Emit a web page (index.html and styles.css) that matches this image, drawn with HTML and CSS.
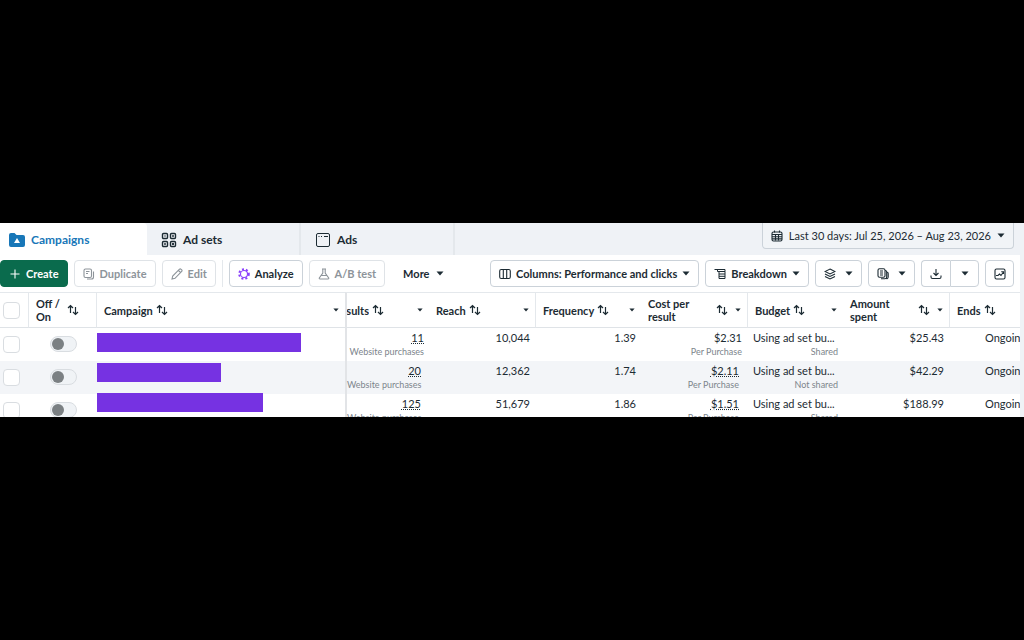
FILE: index.html
```html
<!DOCTYPE html>
<html lang="en">
<head>
    <meta charset="UTF-8">
    <meta name="viewport" content="width=device-width, initial-scale=1.0">
    <title>Ads Manager - Campaigns</title>
    <link rel="stylesheet" href="styles.css">
</head>
<body>
    <!-- Shared icons -->
    <svg class="sprite" aria-hidden="true">
        <symbol id="i-sort" viewBox="0 0 12 12"><path d="M3.500 9V1.500M1 4l2.500-2.500L6 4M8.500 3v7.500M6 8l2.500 2.500L11 8"/></symbol>
        <symbol id="i-caret" viewBox="0 0 8 5"><path d="M0.500 0.500h7L4 4.500z"/></symbol>
    </svg>

    <main class="manager">
        <header class="top-bar">
            <nav class="tabs">
                <a href="#" class="tab active">
                    <svg class="icon-tab" viewBox="0 0 16 16"><path fill="#1877b8" d="M0 3a2 2 0 0 1 2-2h3.500l2 2H14a2 2 0 0 1 2 2v8a2 2 0 0 1-2 2H2a2 2 0 0 1-2-2z"/><path fill="#fff" d="M8 6l3 5H5z"/></svg>
                    Campaigns
                </a>
                <a href="#" class="tab">
                    <svg class="icon-tab line-icon" viewBox="0 0 16 16"><rect x="1.500" y="1.500" width="5" height="5" rx="1"/><rect x="9.500" y="1.500" width="5" height="5" rx="1"/><rect x="1.500" y="9.500" width="5" height="5" rx="1"/><rect x="9.500" y="9.500" width="5" height="5" rx="1"/><path d="M12 3v2M4 11v2M12 11v2M11 12h2M3.500 4h1"/></svg>
                    Ad sets
                </a>
                <a href="#" class="tab">
                    <svg class="icon-tab line-icon thin" viewBox="0 0 16 16"><rect x="1.500" y="1.500" width="13" height="13" rx="1.500"/><path d="M3.500 4.500h1M6 4.500h1M9 4.500h4"/></svg>
                    Ads
                </a>
            </nav>
            <button class="btn date-btn">
                <svg class="icon" viewBox="0 0 12 12"><rect x="1" y="2" width="10" height="9" rx="1.500"/><path d="M1 4.500h10M3.500 0.500v2M8.500 0.500v2M1 6.700h10M1 8.900h10M4.500 5v5.500M7.500 5v5.500"/></svg>
                Last 30 days: Jul 25, 2026 – Aug 23, 2026
                <svg class="caret"><use href="#i-caret"/></svg>
            </button>
        </header>

        <div class="workspace">
            <div class="toolbar">
                <button class="btn primary"><svg class="icon" viewBox="0 0 12 12"><path d="M6 1.500v9M1.500 6h9"/></svg>Create</button>
                <button class="btn muted"><svg class="icon" viewBox="0 0 12 12"><rect x="1" y="1" width="7.500" height="8.500" rx="1.500"/><path d="M3 3.500h3.500M3 5.500h2M10.500 3.500v5.500a2 2 0 0 1-2 2H4"/></svg>Duplicate</button>
                <button class="btn muted"><svg class="icon" viewBox="0 0 12 12"><path d="M1 11l.7-3L8.500 1.200q.8-.6 1.600.1l.6.6q.7.800 0 1.600L4 10.300zM7.500 2.500L9.500 4.500"/></svg>Edit</button>
                <span class="divider"></span>
                <button class="btn"><svg class="icon analyze" viewBox="0 0 12 12"><circle cx="6" cy="6" r="3.500"/><circle class="dots" cx="6" cy="6" r="4.800"/></svg>Analyze</button>
                <button class="btn muted"><svg class="icon" viewBox="0 0 12 12"><path d="M4 1h4M4.800 1v4L1.300 10q-.3 1 .7 1h8q1 0 .7-1L7.200 5V1M3.500 7.500h5"/></svg>A/B test</button>
                <button class="btn plain">More <svg class="caret"><use href="#i-caret"/></svg></button>

                <div class="toolbar-right">
                    <button class="btn"><svg class="icon" viewBox="0 0 12 12"><rect x="0.700" y="1.500" width="10.600" height="9" rx="1.500"/><path d="M4.300 1.500v9M7.700 1.500v9"/></svg>Columns: Performance and clicks<svg class="caret"><use href="#i-caret"/></svg></button>
                    <button class="btn"><svg class="icon thin" viewBox="0 0 12 12"><path d="M0.500 1.500h10.500v2H3.500v-2M5 3.500h6v7H5zM5 6h6M5 8.300h6"/></svg>Breakdown<svg class="caret"><use href="#i-caret"/></svg></button>
                    <button class="btn icon-btn" aria-label="View"><svg class="icon" viewBox="0 0 12 12"><path d="M6 1l5 2.500L6 6 1 3.500zM1 6l5 2.500L11 6M1 8.500L6 11l5-2.500"/></svg><svg class="caret"><use href="#i-caret"/></svg></button>
                    <button class="btn icon-btn" aria-label="Reports"><svg class="icon" viewBox="0 0 12 12"><rect x="1" y="0.700" width="7" height="8.500" rx="1.500"/><path d="M3 3h3M3 5h3M3 7h3M8 2.500q1.700 0 1.700 1.500v5q0 1.800-1.800 1.800H4M9.700 4q1.500 0 1.500 1.500V9q0 1.500-1.500 2"/></svg><svg class="caret"><use href="#i-caret"/></svg></button>
                    <div class="btn-group">
                        <button class="btn square" aria-label="Export"><svg class="icon" viewBox="0 0 12 12"><path d="M6 1v6.500M3.500 5L6 7.500 8.500 5M1 7.500v1.500q0 1.500 1.500 1.500h7q1.500 0 1.500-1.500V7.500"/></svg></button>
                        <button class="btn square" aria-label="Export options"><svg class="caret"><use href="#i-caret"/></svg></button>
                    </div>
                    <button class="btn square" aria-label="Charts"><svg class="icon" viewBox="0 0 12 12"><rect x="1" y="1" width="10" height="10" rx="1.500"/><path d="M2 7.500h2L5.500 6 7 7.500 9.500 4M7.200 3.800h2.300V6"/></svg></button>
                </div>
            </div>

            <div class="table-pane">
                <table class="grid">
                    <colgroup>
                        <col class="c-check"><col class="c-toggle"><col class="c-campaign"><col class="c-results"><col class="c-metric"><col class="c-metric"><col class="c-metric"><col class="c-budget"><col class="c-metric"><col class="c-ends">
                    </colgroup>
                    <thead>
                        <tr>
                            <th class="check"><input type="checkbox" aria-label="Select all"></th>
                            <th class="line"><div class="head wide">Off /<br>On<svg class="sort"><use href="#i-sort"/></svg></div></th>
                            <th class="line"><div class="head">Campaign<svg class="sort"><use href="#i-sort"/></svg><svg class="caret push"><use href="#i-caret"/></svg></div></th>
                            <th class="edge"><div class="head"><span class="cut">Results</span><svg class="sort"><use href="#i-sort"/></svg><svg class="caret push"><use href="#i-caret"/></svg></div></th>
                            <th><div class="head">Reach<svg class="sort"><use href="#i-sort"/></svg><svg class="caret push"><use href="#i-caret"/></svg></div></th>
                            <th class="line"><div class="head">Frequency<svg class="sort"><use href="#i-sort"/></svg><svg class="caret push"><use href="#i-caret"/></svg></div></th>
                            <th><div class="head wide">Cost per<br>result<svg class="sort push"><use href="#i-sort"/></svg><svg class="caret"><use href="#i-caret"/></svg></div></th>
                            <th class="line"><div class="head">Budget<svg class="sort"><use href="#i-sort"/></svg><svg class="caret push"><use href="#i-caret"/></svg></div></th>
                            <th><div class="head wide">Amount<br>spent<svg class="sort push"><use href="#i-sort"/></svg><svg class="caret"><use href="#i-caret"/></svg></div></th>
                            <th class="line"><div class="head">Ends<svg class="sort"><use href="#i-sort"/></svg></div></th>
                        </tr>
                    </thead>
                    <tbody>
                        <tr>
                            <td class="check"><input type="checkbox" aria-label="Select campaign"></td>
                            <td class="toggle"><input type="checkbox" class="switch" role="switch" aria-label="Off / On"></td>
                            <td></td>
                            <td class="edge"><span class="tip">11</span><small>Website purchases</small></td>
                            <td>10,044</td>
                            <td>1.39</td>
                            <td>$2.31<small>Per Purchase</small></td>
                            <td class="budget">Using ad set bu...<small>Shared</small></td>
                            <td>$25.43</td>
                            <td class="ends">Ongoing</td>
                        </tr>
                        <tr>
                            <td class="check"><input type="checkbox" aria-label="Select campaign"></td>
                            <td class="toggle"><input type="checkbox" class="switch" role="switch" aria-label="Off / On"></td>
                            <td></td>
                            <td class="edge inset"><span class="tip">20</span><small>Website purchases</small></td>
                            <td>12,362</td>
                            <td>1.74</td>
                            <td class="inset"><span class="tip">$2.11</span><small>Per Purchase</small></td>
                            <td class="budget">Using ad set bu...<small>Not shared</small></td>
                            <td>$42.29</td>
                            <td class="ends">Ongoing</td>
                        </tr>
                        <tr>
                            <td class="check"><input type="checkbox" aria-label="Select campaign"></td>
                            <td class="toggle"><input type="checkbox" class="switch" role="switch" aria-label="Off / On"></td>
                            <td></td>
                            <td class="edge inset"><span class="tip">125</span><small>Website purchases</small></td>
                            <td>51,679</td>
                            <td>1.86</td>
                            <td class="inset"><span class="tip">$1.51</span><small>Per Purchase</small></td>
                            <td class="budget">Using ad set bu...<small>Shared</small></td>
                            <td>$188.99</td>
                            <td class="ends">Ongoing</td>
                        </tr>
                    </tbody>
                </table>

                <!-- Blocks covering the campaign names -->
                <div class="masks">
                    <span class="mask long"></span>
                    <span class="mask short"></span>
                    <span class="mask medium"></span>
                </div>
            </div>
        </div>
    </main>
</body>
</html>
```

FILE: styles.css
```css
* {
    margin: 0;
    padding: 0;
    box-sizing: border-box;
}

body {
    min-height: 100vh;
    display: flex;
    flex-direction: column;
    justify-content: center;
    font-family: Lato, Roboto, Arial, sans-serif;
    font-size: 11px;
    line-height: 14px;
    color: #1c2b33;
    background-color: #000;
}

button,
input {
    font: inherit;
    color: inherit;
}

.sprite {
    position: absolute;
    width: 0;
    height: 0;
}

.manager {
    background-color: #eff2f6;
    overflow: hidden;
}

/* Tabs and date range */
.top-bar {
    display: flex;
    justify-content: space-between;
    align-items: flex-start;
    height: 32px;
    padding-right: 10px;
}

.tabs {
    display: flex;
    gap: 5px;
    height: 100%;
}

.tab {
    display: flex;
    align-items: center;
    gap: 6px;
    width: 149px;
    padding: 2px 9px 0;
    border-right: 2px solid #e4e8ec;
    font-size: 12px;
    font-weight: 700;
    color: #1c2b33;
    text-decoration: none;
}

.tab.active {
    width: 147px;
    color: #1877b8;
    background-color: #fff;
    border-right: none;
    border-radius: 0 4px 0 0;
}

.icon-tab {
    width: 16px;
    height: 16px;
}

.line-icon,
.icon {
    fill: none;
    stroke: currentColor;
}

.line-icon {
    stroke-width: 1.4;
}

.icon {
    width: 12px;
    height: 12px;
    flex: none;
    stroke-width: 1.1;
}

.thin {
    stroke-width: 1;
}

/* Buttons */
.btn {
    display: flex;
    align-items: center;
    gap: 5px;
    height: 27px;
    padding: 0 8px;
    border: 1px solid #cbd2d9;
    border-radius: 4px;
    background-color: #fff;
    font-weight: 700;
    white-space: nowrap;
    cursor: pointer;
}

.caret {
    width: 8px;
    height: 5px;
    flex: none;
    fill: currentColor;
}

.btn.date-btn {
    gap: 6px;
    height: 26px;
    border-top: none;
    border-radius: 0 0 4px 4px;
    background-color: #f1f4f7;
    font-weight: 400;
}

.btn.primary {
    color: #fff;
    background-color: #0a6b4d;
    border-color: #0a6b4d;
}

.btn.muted {
    color: #8d949a;
    border-color: #dfe3e7;
}

.btn.plain {
    gap: 7px;
    border-color: transparent;
    margin-left: 3px;
}

.btn.icon-btn {
    gap: 9px;
}

.btn.square {
    justify-content: center;
    width: 29px;
    padding: 0;
}

.btn-group {
    display: flex;
}

.btn-group .btn:first-child {
    border-right: none;
    border-radius: 4px 0 0 4px;
}

.btn-group .btn:last-child {
    border-radius: 0 4px 4px 0;
}

.icon.analyze {
    stroke: #8a3ffc;
}

.analyze .dots {
    stroke-width: 2;
    stroke-dasharray: 2 2;
}

.divider {
    width: 1px;
    height: 27px;
    background-color: #e4e8ec;
}

/* Workspace */
.workspace {
    margin-right: 4px;
    background-color: #fff;
}

.toolbar {
    display: flex;
    gap: 6px;
    padding: 5px 6px 5px 0;
}

.toolbar-right {
    display: flex;
    gap: 6px;
    margin-left: auto;
}

/* Table */
.table-pane {
    position: relative;
    height: 125px;
    overflow: hidden;
}

.grid {
    width: 100%;
    table-layout: fixed;
    border-collapse: separate;
    border-spacing: 0;
}

.c-check { width: 28px; }
.c-toggle { width: 68px; }
.c-results { width: 84px; }
.c-metric { width: 106px; }
.c-budget { width: 96px; }
.c-ends { width: 71px; }

th {
    height: 36px;
    border-top: 1px solid #e4e8ec;
    border-bottom: 1px solid #dfe3e7;
    line-height: 13px;
    font-weight: 700;
    text-align: left;
}

th.line {
    border-left: 1px solid #e4e8ec;
}

.head {
    display: flex;
    align-items: center;
    gap: 3px;
    padding: 0 6px 0 7px;
}

.head.wide {
    gap: 7px;
}

.sort {
    width: 12px;
    height: 12px;
    flex: none;
    fill: none;
    stroke: currentColor;
    stroke-width: 1.2;
}

.head .caret {
    width: 6px;
    height: 4px;
}

.push {
    margin-left: auto;
}

.cut {
    display: flex;
    justify-content: flex-end;
    width: 22px;
    overflow: hidden;
}

td {
    height: 33px;
    padding: 3px 5px 3px 6px;
    text-align: right;
    vertical-align: top;
    white-space: nowrap;
}

tbody tr:nth-child(even) {
    background-color: #f3f5f8;
}

td small {
    display: block;
    font-size: 9px;
    line-height: 13px;
    color: #7d858c;
}

.edge {
    border-left: 2px solid #e2e4e7;
}

.edge .head {
    padding-left: 0;
}

td.edge {
    padding-left: 0;
}

td.inset {
    padding-right: 8px;
}

td.budget {
    text-align: left;
}

td.budget small {
    text-align: right;
}

td.ends {
    padding-left: 36px;
    text-align: left;
    overflow: hidden;
}

.tip {
    text-decoration: underline dotted;
    text-underline-offset: 1px;
}

td.check,
td.toggle {
    vertical-align: middle;
    text-align: left;
}

.check,
td.check {
    padding: 0 3px;
}

.check input,
.switch {
    display: block;
    appearance: none;
    background-color: #fff;
    border: 1px solid #d9dde1;
}

.check input {
    width: 17px;
    height: 17px;
    border-radius: 4px;
}

td.toggle {
    padding: 0 0 1px 22px;
}

.switch {
    width: 27px;
    height: 16px;
    padding: 1px;
    border-radius: 8px;
    background-color: #f0f3f6;
}

.switch::before {
    content: "";
    display: block;
    width: 12px;
    height: 12px;
    border-radius: 50%;
    background-color: #7b8083;
}

.masks {
    position: absolute;
    top: 41px;
    left: 97px;
    display: flex;
    flex-direction: column;
    gap: 11px;
}

.mask {
    height: 19px;
    background-color: #7632e2;
}

.mask.long { width: 204px; }
.mask.short { width: 124px; }
.mask.medium { width: 166px; }
```
